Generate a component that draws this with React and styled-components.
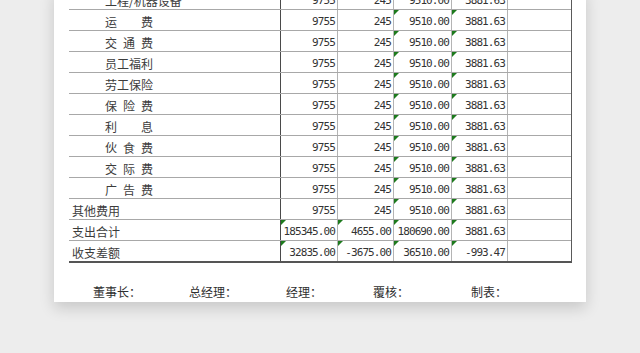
import styled, { createGlobalStyle } from 'styled-components';

const GlobalStyle = createGlobalStyle`
	html, body {
		margin: 0;
		padding: 0;
		background: #ededed;
		overflow: hidden;
	}
	body {
		font-family: "Noto Sans CJK SC", "Noto Sans", sans-serif;
	}
`;

const Page = styled.div`
	width: 640px;
	height: 353px;
	padding-left: 54px;
	box-sizing: border-box;
`;

const Paper = styled.div`
	width: 532px;
	margin-top: -11px;
	padding: 0 14px 0 15px;
	box-sizing: border-box;
	background: #fff;
	box-shadow: 0 6px 14px rgba(0, 0, 0, 0.16);
`;

const Table = styled.div`
	display: flex;
	flex-direction: column;
	border-right: 1px solid #5a5a5a;
	border-bottom: 2px solid #555;
`;

const Row = styled.div`
	display: grid;
	grid-template-columns: 212px 57px 56px 58px 56px 63px;
	height: 21px;
	box-sizing: border-box;
	border-bottom: 1px solid #a8a8a8;

	&:last-child {
		border-bottom: none;
		height: 20px;
	}
`;

const Label = styled.div`
	display: flex;
	align-items: center;
	padding: 2px 0 0 ${({ $sub }) => ($sub ? '36px' : '3px')};
	font-size: 12px;
	color: #3c3c3c;
	letter-spacing: ${({ $spread }) => $spread || 0}px;
	white-space: nowrap;
	border-right: 1px solid #4a4a4a;
`;

const Cell = styled.div`
	position: relative;
	display: flex;
	align-items: center;
	justify-content: flex-end;
	padding: 2px 2px 0 0;
	font-family: "DejaVu Sans Mono", "Liberation Mono", monospace;
	font-size: 11px;
	letter-spacing: -0.9px;
	color: #333;
	border-right: 1px solid #b4b4b4;

	&:last-child {
		border-right: none;
	}
`;

const Flag = styled.span`
	position: absolute;
	top: 0;
	left: 0;
	width: 0;
	height: 0;
	border-top: 5px solid #1d7a1d;
	border-right: 5px solid transparent;
`;

const Signatures = styled.div`
	display: grid;
	grid-template-columns: 96px 97px 87px 98px auto;
	padding: 20px 0 6px 24px;
	font-size: 12px;
	color: #2e2e2e;
	height: 39px;
	box-sizing: border-box;
	align-items: center;
`;

const Sign = styled.div`
	white-space: nowrap;
`;

const std = ['9755', '245', '9510.00', '3881.63'];
const stdFlags = [false, false, true, true];

const rows = [
	{ label: '工程/机器设备', sub: true },
	{ label: '运费', sub: true, spread: 24 },
	{ label: '交通费', sub: true, spread: 6 },
	{ label: '员工福利', sub: true },
	{ label: '劳工保险', sub: true },
	{ label: '保险费', sub: true, spread: 6 },
	{ label: '利息', sub: true, spread: 24 },
	{ label: '伙食费', sub: true, spread: 6 },
	{ label: '交际费', sub: true, spread: 6 },
	{ label: '广告费', sub: true, spread: 6 },
	{ label: '其他费用' },
	{
		label: '支出合计',
		values: ['185345.00', '4655.00', '180690.00', '3881.63'],
		flags: [true, true, true, true],
	},
	{
		label: '收支差额',
		values: ['32835.00', '-3675.00', '36510.00', '-993.47'],
		flags: [true, true, true, true],
	},
];

const signers = ['董事长：', '总经理：', '经理：', '覆核：', '制表：'];

export default function App() {
	return (
		<Page>
			<GlobalStyle />
			<Paper>
				<Table>
					{rows.map(({ label, sub, spread, values = std, flags = stdFlags }) => (
						<Row key={label}>
							<Label $sub={sub} $spread={spread}>
								{label}
							</Label>
							{values.map((v, i) => (
								<Cell key={i}>
									{flags[i] && <Flag />}
									{v}
								</Cell>
							))}
							<Cell />
						</Row>
					))}
				</Table>
				<Signatures>
					{signers.map((s) => (
						<Sign key={s}>{s}</Sign>
					))}
				</Signatures>
			</Paper>
		</Page>
	);
}
